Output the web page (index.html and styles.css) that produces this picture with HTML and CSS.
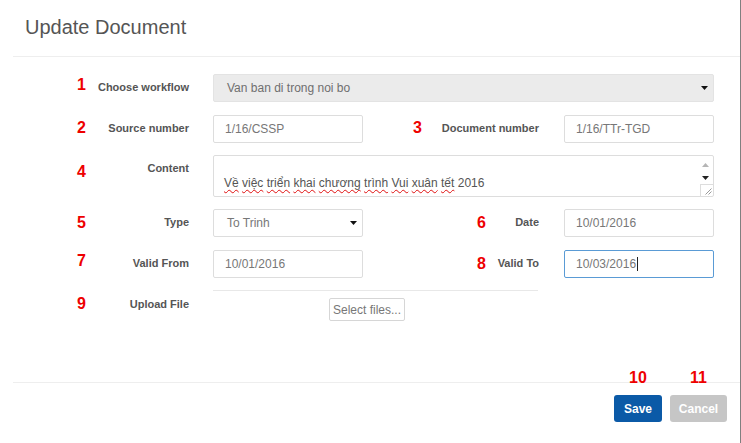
FILE: index.html
```html
<!DOCTYPE html>
<html lang="en">
<head>
<meta charset="utf-8">
<title>Update Document</title>
<link rel="stylesheet" href="styles.css">
</head>
<body>
<div class="modal">
  <header class="modal-header">
    <h1 class="title">Update Document</h1>
  </header>
  <main class="modal-body">
    <div class="form">
      <div class="lbl"><span class="num n-top3">1</span><span class="lbl-text">Choose workflow</span></div>
      <div class="select select-wide span-3">
        <span>Van ban di trong noi bo</span>
        <svg class="caret" width="7" height="4" viewBox="0 0 7 4"><path d="M0 0H7L3.5 4Z"/></svg>
      </div>

      <div class="lbl"><span class="num n-top5">2</span><span class="lbl-text">Source number</span></div>
      <div class="field">1/16/CSSP</div>
      <div class="lbl lbl-right"><span class="num n-top5 n-off50">3</span><span class="lbl-text">Document number</span></div>
      <div class="field">1/16/TTr-TGD</div>

      <div class="lbl"><span class="num n-top9">4</span><span class="lbl-text">Content</span></div>
      <div class="textarea span-3">
        <div class="ta-text">
          <p class="ta-line"><span class="sp">Về</span> <span class="sp">việc</span> <span class="sp">triển</span> <span class="sp">khai</span> <span class="sp">chương</span> <span class="sp">trình</span> <span class="sp">Vui</span> <span class="sp">xuân</span> <span class="sp">tết</span> 2016</p>
        </div>
        <div class="ta-scroll">
          <svg class="ta-up" width="7" height="4" viewBox="0 0 7 4"><path d="M3.5 0L7 4H0Z"/></svg>
          <svg class="ta-down" width="7" height="4" viewBox="0 0 7 4"><path d="M0 0H7L3.5 4Z"/></svg>
          <div class="ta-grip">
            <svg width="8" height="8" viewBox="0 0 8 8"><path d="M7.5 1.5L1.5 7.5M7.5 4.5L4.5 7.5" stroke="#9a9a9a" stroke-width="1" fill="none"/></svg>
          </div>
        </div>
      </div>

      <div class="lbl"><span class="num">5</span><span class="lbl-text">Type</span></div>
      <div class="select select-small">
        <span>To Trinh</span>
        <svg class="caret" width="7" height="4" viewBox="0 0 7 4"><path d="M0 0H7L3.5 4Z"/></svg>
      </div>
      <div class="lbl lbl-right"><span class="num n-off114">6</span><span class="lbl-text">Date</span></div>
      <div class="field">10/01/2016</div>

      <div class="lbl"><span class="num n-top3">7</span><span class="lbl-text">Valid From</span></div>
      <div class="field">10/01/2016</div>
      <div class="lbl lbl-right"><span class="num n-off114">8</span><span class="lbl-text">Valid To</span></div>
      <div class="field field-focus"><span>10/03/2016</span><span class="cursor"></span></div>

      <div class="lbl"><span class="num">9</span><span class="lbl-text lbl-upload">Upload File</span></div>
      <div class="upload span-2">
        <button class="btn-select" type="button">Select files...</button>
      </div>
    </div>
  </main>
  <footer class="modal-footer">
    <button class="btn btn-save" type="button">Save<span class="badge">10</span></button>
    <button class="btn btn-cancel" type="button">Cancel<span class="badge">11</span></button>
  </footer>
</div>
</body>
</html>
```

FILE: styles.css
```css
* { box-sizing: border-box; }

html, body {
  margin: 0;
  padding: 0;
  background: #ffffff;
  font-family: "Liberation Sans", Arial, sans-serif;
}

.modal {
  margin-left: 13px;
  width: 728px;
  height: 443px;
  border-right: 1px solid #808080;
  display: flex;
  flex-direction: column;
  background: #fff;
}

.modal-header {
  padding: 15px 0 17px 12px;
  border-bottom: 1px solid #eeeeee;
}

.title {
  margin: 0;
  font-size: 20px;
  line-height: 24px;
  font-weight: normal;
  color: #555555;
}

.modal-body {
  flex: 1;
  padding-top: 17px;
}

.form {
  margin-left: 64px;
  display: grid;
  grid-template-columns: 136px 150px 201px 150px;
  grid-template-rows: 29px 28px 42px 29px 28px auto;
  row-gap: 12px;
  align-items: start;
}

.span-3 { grid-column: span 3; }
.span-2 { grid-column: span 2; }

.lbl {
  display: flex;
  align-items: flex-start;
  padding-right: 24px;
}

.lbl-right { padding-right: 25px; }

.lbl-text {
  margin-left: auto;
  padding-top: 6px;
  font-size: 11px;
  line-height: 14px;
  font-weight: bold;
  color: #555555;
  white-space: nowrap;
}

.lbl-upload { padding-top: 7px; }

.num {
  margin-top: 6px;
  font-size: 16px;
  line-height: 16px;
  font-weight: bold;
  color: #ee0000;
}

.n-top3 { margin-top: 3px; }
.n-top5 { margin-top: 5px; }
.n-top9 { margin-top: 9px; }
.n-off50 { margin-left: 50px; }
.n-off114 { margin-left: 114px; }

.field,
.select {
  height: 28px;
  border: 1px solid #dddddd;
  border-radius: 2px;
  font-size: 12px;
  line-height: 26px;
  color: #777777;
  background: #ffffff;
}

.field {
  padding: 0 11px;
  display: flex;
  align-items: center;
}

.field-focus {
  border-color: #5a9bd5;
}

.cursor {
  display: inline-block;
  width: 1px;
  height: 14px;
  background: #222;
  margin-left: 1px;
}

.select {
  display: flex;
  align-items: center;
  justify-content: space-between;
  padding: 0 5px 0 13px;
}

.select-wide {
  background: #ebebeb;
  border-color: #e3e3e3;
  color: #6f6f6f;
}

.caret { fill: #111; }

.textarea {
  height: 42px;
  border: 1px solid #dddddd;
  border-radius: 2px;
  display: flex;
}

.ta-text {
  flex: 1;
  display: flex;
  align-items: flex-end;
  padding: 0 0 5px 10px;
}

.ta-line {
  margin: 0;
  font-size: 12px;
  line-height: 16px;
  color: #555555;
  white-space: nowrap;
}

.sp {
  text-decoration: underline wavy #e01010;
  text-decoration-thickness: 1px;
  text-underline-offset: 2px;
  text-decoration-skip-ink: none;
}

.ta-scroll {
  width: 16px;
  display: flex;
  flex-direction: column;
  align-items: center;
}

.ta-up {
  margin-top: 7px;
  fill: #b5b5b5;
}

.ta-down {
  margin-top: 9px;
  fill: #222;
}

.ta-grip {
  margin-top: auto;
  align-self: flex-end;
  width: 13px;
  height: 12px;
  border-left: 1px solid #dddddd;
  border-top: 1px solid #dddddd;
  display: flex;
  align-items: flex-end;
  justify-content: flex-end;
  padding: 0 1px 1px 0;
}

.ta-grip svg { display: block; }

.upload {
  margin-right: 26px;
  border-top: 1px solid #e8e8e8;
  padding-top: 7px;
}

.btn-select {
  margin-left: 116px;
  width: 76px;
  height: 23px;
  border: 1px solid #d6d6d6;
  border-radius: 2px;
  background: #ffffff;
  font-family: "Liberation Sans", Arial, sans-serif;
  font-size: 12px;
  color: #777777;
  padding: 0;
}

.modal-footer {
  height: 61px;
  border-top: 1px solid #eeeeee;
  padding: 12px 13px 0 0;
  display: flex;
  justify-content: flex-end;
  align-items: flex-start;
  gap: 8px;
}

.btn {
  position: relative;
  height: 27px;
  border: none;
  border-radius: 3px;
  font-family: "Liberation Sans", Arial, sans-serif;
  font-size: 12px;
  font-weight: bold;
  color: #ffffff;
  padding: 0;
}

.btn-save {
  width: 48px;
  background: #0b5aa7;
}

.btn-cancel {
  width: 57px;
  background: #c6c6c6;
}

.badge {
  position: absolute;
  left: 50%;
  bottom: calc(100% + 9px);
  transform: translateX(-50%);
  font-size: 16px;
  line-height: 16px;
  font-weight: bold;
  color: #ee0000;
}
```
